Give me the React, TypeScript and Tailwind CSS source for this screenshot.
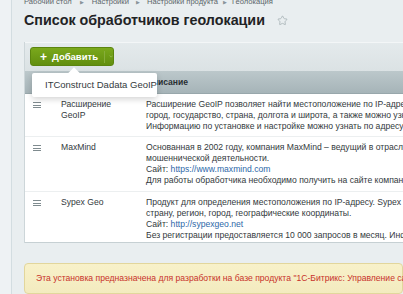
import { Star } from 'lucide-react';

const rows = [
  {
    name: ['Расширение', 'GeoIP'],
    desc: [
      'Расширение GeoIP позволяет найти местоположение по IP-адресу и получить информацию',
      'город, государство, страна, долгота и широта, а также можно узнать название провайдера.',
      'Информацию по установке и настройке можно узнать по адресу: http://php.net/manual/ru/',
    ],
    pad: 'pt-[5px] pb-[4px]',
  },
  {
    name: ['MaxMind'],
    desc: [
      'Основанная в 2002 году, компания MaxMind – ведущий в отрасли поставщик средств защиты от',
      'мошеннической деятельности.',
      'link:https://www.maxmind.com',
      'Для работы обработчика необходимо получить на сайте компании ключ лицензии.',
    ],
    pad: 'pt-[5px] pb-[5px]',
  },
  {
    name: ['Sypex Geo'],
    desc: [
      'Продукт для определения местоположения по IP-адресу. Sypex Geo позволяет получить',
      'страну, регион, город, географические координаты.',
      'link:http://sypexgeo.net',
      'Без регистрации предоставляется 10 000 запросов в месяц. Информацию о тарифах можно',
    ],
    pad: 'pt-[5px] pb-[1px]',
  },
];

function Burger() {
  return (
    <div className="flex flex-col gap-[1.5px] w-[8px] pt-[3px]">
      <div className="h-[1px] bg-[#7f8b8f]" />
      <div className="h-[1px] bg-[#7f8b8f]" />
      <div className="h-[1px] bg-[#7f8b8f]" />
    </div>
  );
}

export default function App() {
  return (
    <div className="w-[403px] h-[294px] overflow-hidden bg-[#e9eef0] flex font-['Liberation_Sans',Arial,sans-serif]">
      <div className="w-[12px] shrink-0 bg-[#eef2f4] border-r border-[#d3dde1]" />
      <div className="flex-1 min-w-0 pl-[12px] flex flex-col relative">
        <div className="mt-[-3px] h-[10px] text-[7.6px] leading-[10px] text-[#5c666a] whitespace-nowrap flex items-center">
          <span>Рабочий стол</span>
          <span className="mx-[8px] text-[5px] text-[#8a9499]">▶</span>
          <span>Настройки</span>
          <span className="mx-[7px] text-[5px] text-[#8a9499]">▶</span>
          <span>Настройки продукта</span>
          <span className="mx-[5px] text-[5px] text-[#8a9499]">▶</span>
          <span>Геолокация</span>
        </div>
        <div className="mt-[3px] h-[20px] flex items-center whitespace-nowrap">
          <span className="text-[14.3px] leading-[20px] font-bold text-[#1f2325]">
            Список обработчиков геолокации
          </span>
          <Star className="ml-[12px] w-[11px] h-[11px] text-[#a8b2b6]" strokeWidth={1.8} />
        </div>

        <div className="mt-[12px] border-l border-[#cdd6d9] flex flex-col">
          <div className="h-[29px] border-t border-[#f3f6f7] bg-gradient-to-b from-[#e4eaec] to-[#dbe2e4] pt-[4px] pl-[5px]">
            <div className="w-[84px] h-[19px] rounded-[3px] bg-gradient-to-b from-[#7aa81c] to-[#628f0f] border border-[#5b850f] flex items-center text-white">
              <span className="ml-[9px] text-[12px] leading-none font-bold">+</span>
              <span className="ml-[5px] text-[9.5px] leading-none font-bold">Добавить</span>
              <span className="ml-[6px] w-px h-[12px] bg-[#86ad3a]" />
              <svg className="ml-[4px]" width="7" height="5" viewBox="0 0 7 5">
                <path d="M1 1l2.5 2.5L6 1" fill="none" stroke="#a9c86e" strokeWidth="1" />
              </svg>
            </div>
          </div>
          <div className="h-[23px] bg-gradient-to-b from-[#bcc8cb] to-[#a6b4b8] border-b border-[#98a7ab] flex items-center">
            <span className="ml-[121px] text-[8.6px] font-bold text-[#2a3033]">Описание</span>
          </div>
          <div className="bg-white border-b border-[#c6d0d3]">
            {rows.map((r, i) => (
              <div
                key={i}
                className={`flex ${r.pad} ${i > 0 ? 'border-t border-[#eceff0]' : ''} text-[8.6px] leading-[11px] text-[#333a3d]`}
              >
                <div className="w-[36px] shrink-0 pl-[8px]">
                  <Burger />
                </div>
                <div className="w-[85px] shrink-0">
                  {r.name.map((n) => (
                    <div key={n}>{n}</div>
                  ))}
                </div>
                <div className="min-w-0 whitespace-nowrap">
                  {r.desc.map((d) =>
                    d.startsWith('link:') ? (
                      <div key={d}>
                        Сайт: <span className="text-[#2d68a8]">{d.slice(5)}</span>
                      </div>
                    ) : (
                      <div key={d}>{d}</div>
                    )
                  )}
                </div>
              </div>
            ))}
          </div>
        </div>

        <div className="mt-[20px] h-[50px] rounded-[4px] border border-[#e2d69c] bg-gradient-to-b from-[#f8f1c9] to-[#f3ebbf] pl-[11px] pt-[9px] whitespace-nowrap text-[8.6px] leading-[11px] text-[#c8322a]">
          Эта установка предназначена для разработки на базе продукта "1С-Битрикс: Управление сайтом"
        </div>

        <div className="absolute left-[20px] top-[73px] w-[125px] h-[24px] bg-white rounded-[2px] shadow-[0_2px_6px_rgba(0,0,0,0.18)] flex items-center pl-[13px] text-[9.5px] text-[#333a3d] whitespace-nowrap">
          <div className="absolute left-[38px] top-[-4px] w-[8px] h-[8px] bg-white rotate-45" />
          <span className="relative">ITConstruct Dadata GeoIP</span>
        </div>
      </div>
    </div>
  );
}
